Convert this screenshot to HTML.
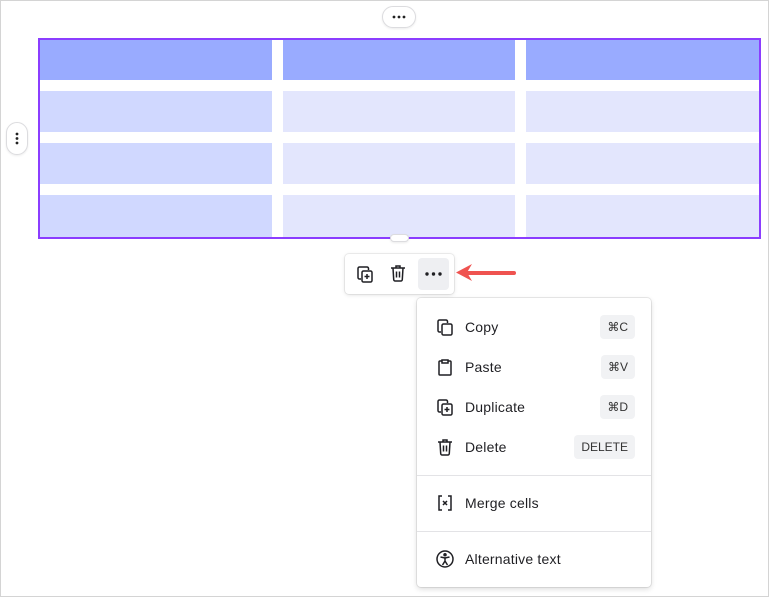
<!DOCTYPE html>
<html><head><style>
*{margin:0;padding:0;box-sizing:border-box}
body{width:769px;height:597px;position:relative;background:#fff;font-family:"Liberation Sans",sans-serif;overflow:hidden}
.frame{position:absolute;left:0;top:0;width:769px;height:597px;border:1px solid #d4d4d4}
.a{position:absolute}
.c{position:absolute}
.pill{position:absolute;background:#fff;border:1px solid #dcdcdf;border-radius:11px;box-shadow:0 1px 2px rgba(0,0,0,.08)}
.menu{position:absolute;left:417px;top:298px;width:234px;height:289px;background:#fff;border-radius:4px;box-shadow:0 0 0 1px rgba(0,0,0,.08),0 2px 6px rgba(0,0,0,.15)}
.it{position:absolute;left:0;width:234px;height:30px;font-size:14px;color:#1f1f23}
.it .t{position:absolute;left:48px;top:7px;letter-spacing:.2px}
.it svg{position:absolute;left:18px;top:5px}
.k{position:absolute;right:16px;top:3px;height:24px;background:#f1f2f4;border-radius:4px;font-size:12px;color:#333;line-height:24px;padding:0 7px}
.hr{position:absolute;left:0;width:234px;height:1px;background:#e3e3e6}
</style></head><body>
<div class="frame"></div>
<div class="a" style="left:38px;top:38px;width:723px;height:201px;border:2px solid #8b3dff"></div>
<div class="c" style="left:40px;top:40px;width:232px;height:40px;background:#99abff"></div>
<div class="c" style="left:283px;top:40px;width:232px;height:40px;background:#99abff"></div>
<div class="c" style="left:526px;top:40px;width:233px;height:40px;background:#99abff"></div>
<div class="c" style="left:40px;top:91px;width:232px;height:41px;background:#d0d8ff"></div>
<div class="c" style="left:283px;top:91px;width:232px;height:41px;background:#e3e6fd"></div>
<div class="c" style="left:526px;top:91px;width:233px;height:41px;background:#e3e6fd"></div>
<div class="c" style="left:40px;top:143px;width:232px;height:41px;background:#d0d8ff"></div>
<div class="c" style="left:283px;top:143px;width:232px;height:41px;background:#e3e6fd"></div>
<div class="c" style="left:526px;top:143px;width:233px;height:41px;background:#e3e6fd"></div>
<div class="c" style="left:40px;top:195px;width:232px;height:42px;background:#d0d8ff"></div>
<div class="c" style="left:283px;top:195px;width:232px;height:42px;background:#e3e6fd"></div>
<div class="c" style="left:526px;top:195px;width:233px;height:42px;background:#e3e6fd"></div>
<div class="pill" style="left:390px;top:234px;width:19px;height:8px;border-radius:4px"></div>
<div class="pill" style="left:382px;top:6px;width:34px;height:22px"><svg width="34" height="22" style="position:absolute;left:-1px;top:-1px"><circle cx="12" cy="11" r="1.4" fill="#222"/><circle cx="17" cy="11" r="1.4" fill="#222"/><circle cx="22" cy="11" r="1.4" fill="#222"/></svg></div>
<div class="pill" style="left:6px;top:122px;width:22px;height:33px"><svg width="22" height="33" style="position:absolute;left:-1px;top:-1px"><circle cx="11" cy="12" r="1.4" fill="#222"/><circle cx="11" cy="16.5" r="1.4" fill="#222"/><circle cx="11" cy="21" r="1.4" fill="#222"/></svg></div>
<div class="a" style="left:345px;top:254px;width:109px;height:40px;background:#fff;border-radius:4px;box-shadow:0 0 0 1px rgba(0,0,0,.06),0 1px 4px rgba(0,0,0,.12)"></div>
<svg class="a" style="left:355px;top:264px" width="20" height="20" fill="none" stroke="#1f1f23" stroke-width="1.5"><path d="M6 15H4.5a1.5 1.5 0 0 1-1.5-1.5V4.5A1.5 1.5 0 0 1 4.5 3H12a1.5 1.5 0 0 1 1.5 1.5V6"/><rect x="7" y="7" width="10" height="11" rx="1.5"/><path d="M12 10v5M9.5 12.5h5"/></svg>
<svg class="a" style="left:388px;top:263px" width="20" height="20" fill="none" stroke="#1f1f23" stroke-width="1.5"><path d="M3 5h14M8 5V3h4v2M5 5l.7 11.5a1.5 1.5 0 0 0 1.5 1.5h5.6a1.5 1.5 0 0 0 1.5-1.5L15 5M8.5 8.5v6M11.5 8.5v6"/></svg>
<div class="a" style="left:418px;top:258px;width:31px;height:32px;background:#eeeff2;border-radius:4px"></div>
<svg class="a" style="left:418px;top:258px" width="31" height="32"><circle cx="9" cy="16" r="1.7" fill="#1f1f23"/><circle cx="15.5" cy="16" r="1.7" fill="#1f1f23"/><circle cx="22" cy="16" r="1.7" fill="#1f1f23"/></svg>
<svg class="a" style="left:452px;top:260px" width="70" height="24"><path d="M62 13H12" stroke="#ef5350" stroke-width="4" stroke-linecap="round"/><path d="M4 12.5L20 4 15 12.5 20 21Z" fill="#ef5350"/></svg>
<div class="menu">
<div class="it" style="top:14px"><svg width="20" height="20" fill="none" stroke="#1f1f23" stroke-width="1.5"><path d="M6 15H4.5A1.5 1.5 0 0 1 3 13.5V4.5A1.5 1.5 0 0 1 4.5 3H11a1.5 1.5 0 0 1 1.5 1.5V6"/><rect x="7" y="7" width="10" height="11" rx="1.5"/></svg><span class="t">Copy</span><span class="k">⌘C</span></div>
<div class="it" style="top:54px"><svg width="20" height="20" fill="none" stroke="#1f1f23" stroke-width="1.5"><path d="M7 4H5a1 1 0 0 0-1 1v12a1 1 0 0 0 1 1h10a1 1 0 0 0 1-1V5a1 1 0 0 0-1-1h-2"/><path d="M7 6V3h6v3Z"/></svg><span class="t">Paste</span><span class="k">⌘V</span></div>
<div class="it" style="top:94px"><svg width="20" height="20" fill="none" stroke="#1f1f23" stroke-width="1.5"><path d="M6 15H4.5A1.5 1.5 0 0 1 3 13.5V4.5A1.5 1.5 0 0 1 4.5 3H11a1.5 1.5 0 0 1 1.5 1.5V6"/><rect x="7" y="7" width="10" height="11" rx="1.5"/><path d="M12 10v5M9.5 12.5h5"/></svg><span class="t">Duplicate</span><span class="k">⌘D</span></div>
<div class="it" style="top:134px"><svg width="20" height="20" fill="none" stroke="#1f1f23" stroke-width="1.5"><path d="M3 5h14M8 5V3h4v2M5 5l.7 11.5a1.5 1.5 0 0 0 1.5 1.5h5.6a1.5 1.5 0 0 0 1.5-1.5L15 5M8.5 8.5v6M11.5 8.5v6"/></svg><span class="t">Delete</span><span class="k">DELETE</span></div>
<div class="hr" style="top:177px"></div>
<div class="it" style="top:190px"><svg width="20" height="20" fill="none" stroke="#1f1f23" stroke-width="1.5"><path d="M7 3H4v14h3M13 3h3v14h-3M8 8l2 2-2 2M12 8l-2 2 2 2"/></svg><span class="t">Merge cells</span></div>
<div class="hr" style="top:233px"></div>
<div class="it" style="top:246px"><svg width="20" height="20" fill="none" stroke="#1f1f23" stroke-width="1.5"><circle cx="10" cy="10" r="8"/><circle cx="10" cy="5.8" r="1" fill="#1f1f23"/><path d="M5.5 8l4.5 1 4.5-1M10 9v3l-2.5 4M10 12l2.5 4"/></svg><span class="t">Alternative text</span></div>
</div>
</body></html>
